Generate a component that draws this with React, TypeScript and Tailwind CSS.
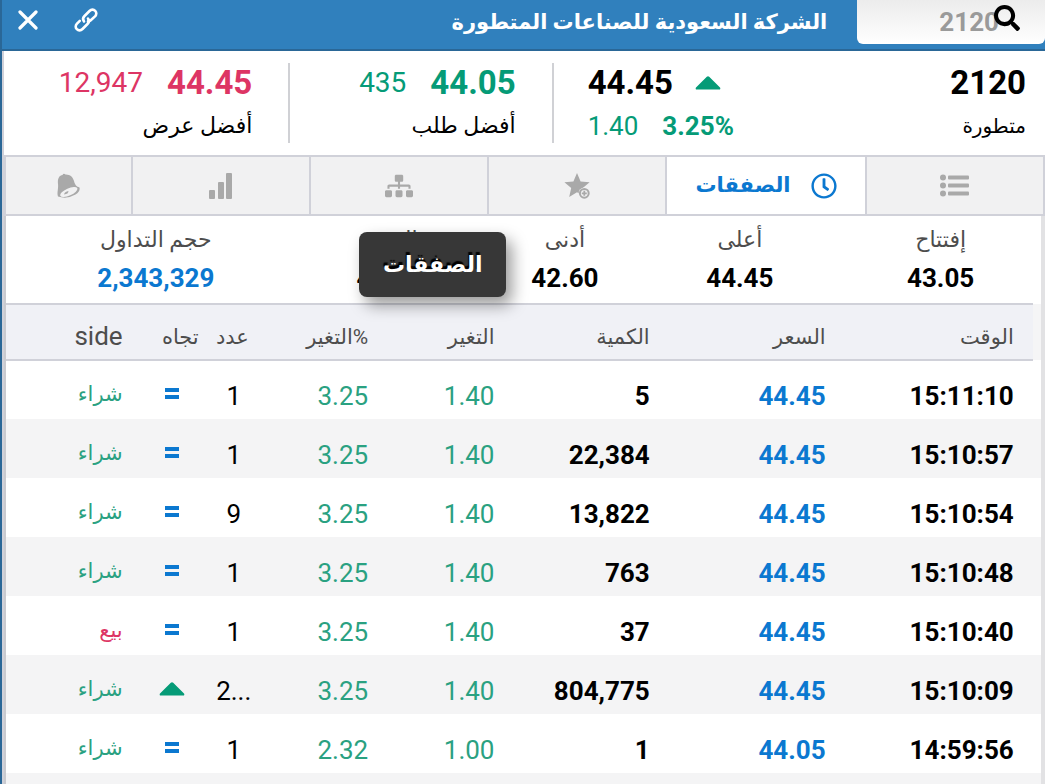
import { FaRegClock, FaSearch, FaSitemap } from 'react-icons/fa';

const summary = [
  { label: 'إفتتاح', value: '43.05', style: 'w-[19.4%]' },
  { label: 'أعلى', value: '44.45', style: 'w-[19.4%]' },
  { label: 'أدنى', value: '42.60', style: 'w-[14.4%]' },
  { label: 'القيمة', value: '44.39', style: 'w-[19.4%]' },
  { label: 'حجم التداول', value: '2,343,329', style: 'w-[27.4%] pl-4', blue: true },
];

const columns = [
  { title: 'الوقت', style: 'w-[17.4%] pr-[19px]' },
  { title: 'السعر', style: 'w-[17%] pr-[27px]' },
  { title: 'الكمية', style: 'w-[15%] pr-[27px]' },
  { title: 'التغير', style: 'w-[12.2%] pr-[27px]' },
  { title: '%التغير', style: 'w-[12.6%] pr-[27px]' },
  { title: 'عدد', style: 'w-[6%] pr-4' },
  { title: 'تجاه', style: 'w-[6%] pr-1' },
  { title: 'side', style: 'pr-[18px]' },
];

const trades = [
  { time: '15:11:10', price: '44.45', qty: '5', change: '1.40', pct: '3.25', count: '1', up: false, side: 'شراء' },
  { time: '15:10:57', price: '44.45', qty: '22,384', change: '1.40', pct: '3.25', count: '1', up: false, side: 'شراء' },
  { time: '15:10:54', price: '44.45', qty: '13,822', change: '1.40', pct: '3.25', count: '9', up: false, side: 'شراء' },
  { time: '15:10:48', price: '44.45', qty: '763', change: '1.40', pct: '3.25', count: '1', up: false, side: 'شراء' },
  { time: '15:10:40', price: '44.45', qty: '37', change: '1.40', pct: '3.25', count: '1', up: false, side: 'بيع' },
  { time: '15:10:09', price: '44.45', qty: '804,775', change: '1.40', pct: '3.25', count: '2...', up: true, side: 'شراء' },
  { time: '14:59:56', price: '44.05', qty: '1', change: '1.00', pct: '2.32', count: '1', up: false, side: 'شراء' },
];

const UpArrow = () => (
  <svg width="26" height="14" viewBox="0 0 26 14" fill="#059b77" className="inline-block">
    <path d="M11.8.8Q13-.4 14.2.8L25 11.6Q26 13.5 24 13.5H2Q0 13.5 1 11.6Z" />
  </svg>
);

const EqualSign = () => (
  <svg width="14" height="12" viewBox="0 0 14 12" fill="#0b78d0" className="inline-block">
    <rect width="14" height="4" />
    <rect y="7" width="14" height="4" />
  </svg>
);

const ListIcon = () => (
  <svg width="29" height="23" viewBox="0 0 29 23" fill="currentColor">
    <circle cx="3" cy="3.5" r="3" />
    <circle cx="3" cy="11.5" r="3" />
    <circle cx="3" cy="19.5" r="3" />
    <rect x="8" y="1.5" width="21" height="4" rx="1" />
    <rect x="8" y="9.5" width="21" height="4" rx="1" />
    <rect x="8" y="17.5" width="21" height="4" rx="1" />
  </svg>
);

const StarPlusIcon = () => (
  <svg width="26" height="26" viewBox="0 0 26 26">
    <path d="M13 0 16.6 8.4 25.6 9.2 18.8 15 20.8 24 13 19.2 5.2 24 7.2 15 .4 9.2 9.4 8.4Z" fill="currentColor" />
    <circle cx="20.300" cy="20.300" r="5.700" fill="#f1f1f2" />
    <circle cx="20.300" cy="20.300" r="4.400" fill="none" stroke="currentColor" strokeWidth="2" />
    <path d="M20.300 17.800V22.800M17.800 20.300H22.800" stroke="currentColor" strokeWidth="1.8" />
  </svg>
);

const BarsIcon = () => (
  <svg width="24" height="26" viewBox="0 0 24 26" fill="currentColor">
    <rect x="0" y="17" width="6" height="9" rx="1" />
    <rect x="9" y="9" width="6" height="17" rx="1" />
    <rect x="17" y="0" width="6" height="26" rx="1" />
  </svg>
);

const BellIcon = () => (
  <svg width="25" height="26" viewBox="0 0 25 26">
    <path
      d="M2 23.5C.6 20 2.6 16 2 11C1.4 6 3 2.5 6.5 2Q7.5-.2 9.5 1.4C14 1.2 17 4 18 8C19 12 20.5 13.5 23.5 14.5Q24.5 18 19.5 21.5Q11 26.5 2 23.5Z"
      fill="currentColor"
    />
    <ellipse cx="12.8" cy="19" rx="9.3" ry="3.6" transform="rotate(-24 12.8 19)" fill="#f1f1f2" />
    <path d="M8 21.5Q8.5 18.5 12.5 18Q12.5 21 8 21.5Z" fill="currentColor" />
  </svg>
);

const LinkIcon = () => (
  <svg width="24" height="24" viewBox="0 0 24 24" fill="none" stroke="currentColor" strokeWidth="2.6" strokeLinecap="round">
    <path d="M10 13.500C8.500 11.500 9 9.500 10.500 8L15.500 3C17.300 1.200 19.700 1.300 21.200 2.800C22.700 4.300 22.700 6.700 21 8.400L16.500 12.500C15.500 13.300 14.800 13.400 14 13.400" />
    <path d="M14 10.500C15.500 12.500 15 14.500 13.500 16L8.500 21C6.700 22.800 4.300 22.700 2.800 21.200C1.300 19.700 1.300 17.300 3 15.600L5.800 12.900" />
  </svg>
);

const CloseIcon = () => (
  <svg width="20" height="20" viewBox="0 0 20 20" stroke="currentColor" strokeWidth="3.2" strokeLinecap="round">
    <path d="M2 2L18 18M18 2L2 18" />
  </svg>
);

const tab = 'flex h-full cursor-pointer items-center justify-center border-l-2 border-[#d0d1d9] bg-[#f1f1f2] text-[#a9a9a9]';

const App = () => {
  return (
    <div
      dir="rtl"
      className="h-screen overflow-hidden border-l-2 border-[#2a6797] bg-white font-['Roboto','DejaVu_Sans',sans-serif] text-black"
    >
      <header className="flex h-[51px] items-start border-b-2 border-[#2a6797] bg-[#3080bd] text-white">
        <div className="relative w-[18%]">
          <input
            aria-label="رمز الشركة"
            defaultValue="2120"
            dir="ltr"
            className="h-[44px] w-full rounded-b-md bg-gradient-to-b from-[#ececec] to-white pr-[46px] text-right text-[26px] font-bold text-[#9a9a9a] outline-none"
          />
          <FaSearch className="absolute top-[5px] right-[25px] size-[26px] text-black" />
        </div>
        <h1 className="pr-[30px] text-[21px] leading-[44px] font-bold">الشركة السعودية للصناعات المتطورة</h1>
        <div className="mr-auto flex h-[40px] items-center gap-9 pl-4">
          <button aria-label="رابط" className="cursor-pointer">
            <LinkIcon />
          </button>
          <button aria-label="إغلاق" className="cursor-pointer">
            <CloseIcon />
          </button>
        </div>
      </header>

      <div className="border-l-2 border-[#d0d1d9]">
        <section className="flex h-[104px] py-3">
          <div className="flex w-[47.2%] justify-between pr-[19px] pl-[34px]">
            <div>
              <div className="text-[33px] leading-10 font-bold">2120</div>
              <div className="text-[20px] leading-[46px]">متطورة</div>
            </div>
            <div dir="ltr">
              <div className="flex items-center gap-[22px] text-[33px] leading-10 font-bold">
                44.45
                <UpArrow />
              </div>
              <div className="flex gap-6 text-[26px] leading-[46px] text-[#059b77]">
                <span>1.40</span>
                <span className="font-bold">3.25%</span>
              </div>
            </div>
          </div>
          <div className="w-[25.3%] border-r-2 border-[#d0d1d5] pr-9">
            <div className="flex gap-6 leading-10 text-[#059b77]">
              <span className="text-[33px] font-bold">44.05</span>
              <span className="text-[28px]">435</span>
            </div>
            <div className="text-[22px] leading-[46px]">أفضل طلب</div>
          </div>
          <div className="flex-1 border-r-2 border-[#d0d1d5] pr-9">
            <div className="flex gap-6 leading-10 text-[#dd3564]">
              <span className="text-[33px] font-bold">44.45</span>
              <span className="text-[28px]">12,947</span>
            </div>
            <div className="text-[22px] leading-[46px]">أفضل عرض</div>
          </div>
        </section>

        <nav className="flex h-[61px] border-y-2 border-[#d0d1d9]">
          <button aria-label="القائمة" className={`${tab} w-[17.3%] border-r-2`}>
            <ListIcon />
          </button>
          <button className="flex w-[19.2%] cursor-pointer items-center justify-center gap-5 border-l-2 border-[#d0d1d9] bg-white text-[21px] font-bold text-[#0b78d0]">
            <FaRegClock className="size-[26px]" />
            الصفقات
          </button>
          <button aria-label="المفضلة" className={`${tab} w-[17.1%]`}>
            <StarPlusIcon />
          </button>
          <button aria-label="الهيكل" className={`${tab} w-[17.1%]`}>
            <FaSitemap className="size-[28px]" />
          </button>
          <button aria-label="الرسم البياني" className={`${tab} w-[17.1%]`}>
            <BarsIcon />
          </button>
          <button aria-label="التنبيهات" className={`${tab} flex-1 border-l-0`}>
            <BellIcon />
          </button>
        </nav>

        <div className="border-r-4 border-l-2 border-r-[#e2e2e4] border-l-[#c9cacf]">
          <section className="relative flex h-[87px] pt-1 text-center">
            {summary.map((item) => (
              <div key={item.label} className={item.style}>
                <div className="text-[22px] leading-10 text-[#4d4d4d]">{item.label}</div>
                <div className={item.blue ? 'text-[26px] leading-9 font-bold text-[#0b78d0]' : 'text-[26px] leading-9 font-bold'}>
                  {item.value}
                </div>
              </div>
            ))}
            <div
              role="tooltip"
              className="absolute top-4 left-[34.1%] rounded-lg bg-[#373737] px-6 text-[22px] leading-[65px] font-bold text-white shadow-[6px_8px_16px_rgba(0,0,0,0.4)] [text-shadow:-1px_-3px_1px_#000]"
            >
              الصفقات
            </div>
          </section>

          <table className="w-full table-fixed text-[26px]">
            <thead>
              <tr className="h-[56px] text-[#4d4d4d]">
                <td className="w-[0.8%] bg-[#f5f5f6]" />
                {columns.map((col) => (
                  <th
                    key={col.title}
                    className={`${col.style} border-y-2 border-[#d0d1d9] bg-[#f0f1f6] pt-2 text-right leading-9 font-normal whitespace-nowrap`}
                  >
                    <span className={col.title === 'side' ? '' : 'text-[21px]'}>{col.title}</span>
                  </th>
                ))}
              </tr>
            </thead>
            <tbody>
              {trades.map((trade) => (
                <tr key={trade.time} className="h-[59px] leading-9 even:bg-[#f4f4f5]">
                  <td />
                  <td className="pt-3 pr-[19px] font-bold">{trade.time}</td>
                  <td className="pt-3 pr-[27px] font-bold text-[#0b78d0]">{trade.price}</td>
                  <td className="pt-3 pr-[27px] font-bold">{trade.qty}</td>
                  <td className="pt-3 pr-[27px] text-[#2aa181]">{trade.change}</td>
                  <td className="pt-3 pr-[27px] text-[#2aa181]">{trade.pct}</td>
                  <td dir="ltr" className="pt-3 text-center">
                    {trade.count}
                  </td>
                  <td className="pt-1 text-center">{trade.up ? <UpArrow /> : <EqualSign />}</td>
                  <td className={`pt-2 pr-[18px] text-[21px] ${trade.side === 'بيع' ? 'text-[#dd3564]' : 'text-[#2aa181]'}`}>
                    {trade.side}
                  </td>
                </tr>
              ))}
              <tr className="h-3 even:bg-[#f4f4f5]">
                <td colSpan={9} />
              </tr>
            </tbody>
          </table>
        </div>
      </div>
    </div>
  );
};

export default App;
